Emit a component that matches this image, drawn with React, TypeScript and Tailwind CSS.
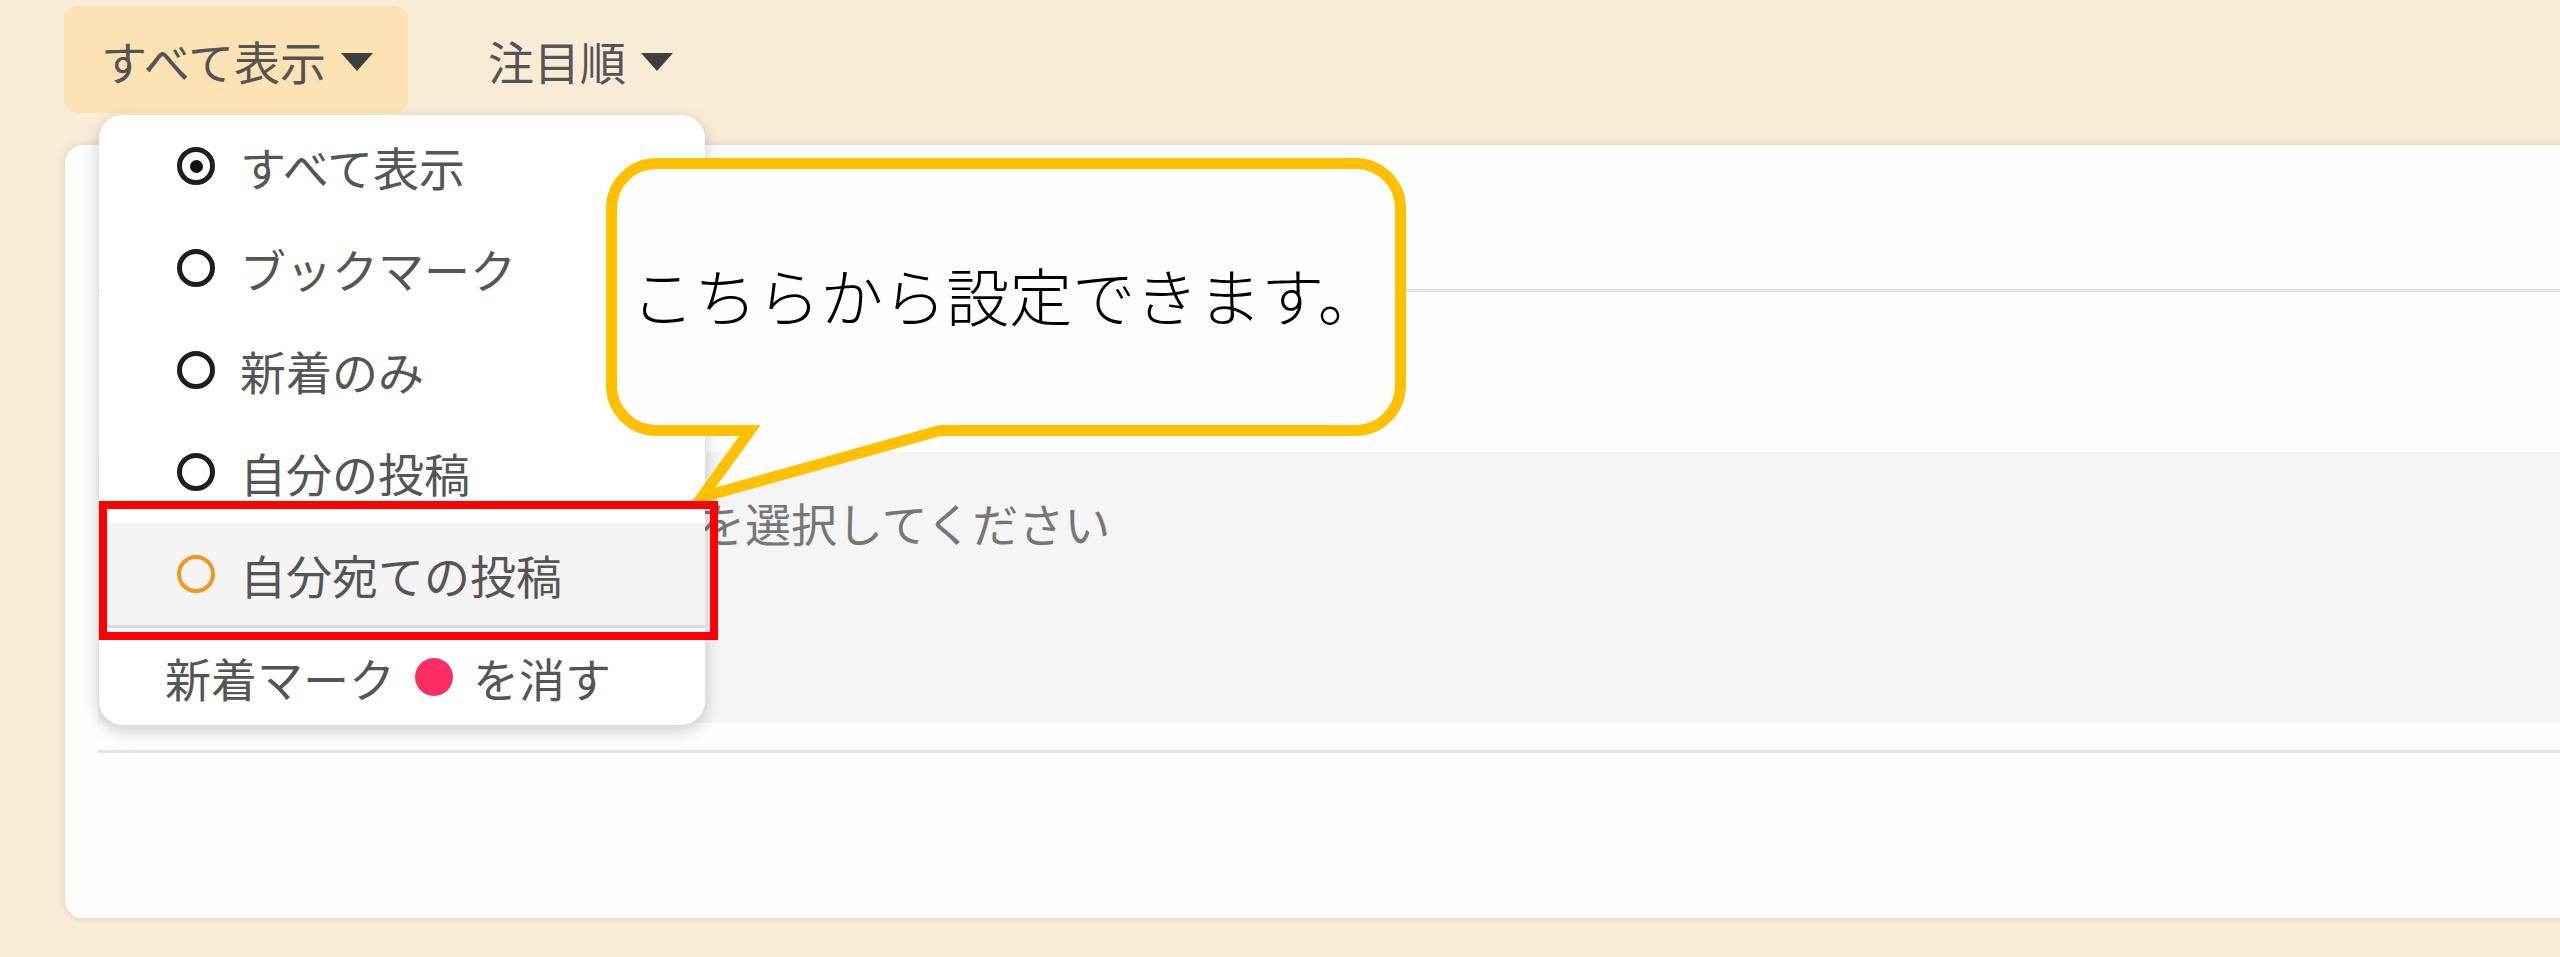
import React from "react";

function Caret() {
  return (
    <svg width="34" height="20" viewBox="0 0 34 20" className="ml-[14px] mt-[4px]">
      <path d="M1 1 H33 L17 19 Z" fill="#3f3f3f" />
    </svg>
  );
}

function Radio({ checked, accent }: { checked?: boolean; accent?: boolean }) {
  if (accent) {
    return <span className="block size-[38px] shrink-0 rounded-full border-[4px] border-[#f3961f]" />;
  }
  return (
    <span className="flex size-[38px] shrink-0 items-center justify-center rounded-full border-[5px] border-[#1e1e1e]">
      {checked && <span className="block size-[13px] rounded-full bg-[#111]" />}
    </span>
  );
}

const items = ["すべて表示", "ブックマーク", "新着のみ", "自分の投稿"];

export default function App() {
  return (
    <div className="relative h-[957px] w-[2560px] overflow-hidden bg-[#f8ecd7] pl-[64px] pt-[6px] font-['Noto_Sans_CJK_JP',sans-serif] text-[46px] text-[#555]">
      {/* tabs */}
      <div className="flex items-center">
        <button className="flex h-[107px] w-[344px] items-center rounded-[14px] bg-[#fde3b4] pl-[37px] leading-none">
          すべて表示
          <Caret />
        </button>
        <button className="ml-[43px] flex h-[107px] items-center px-[37px] leading-none">
          注目順
          <Caret />
        </button>
      </div>

      {/* main card */}
      <div className="ml-[1px] mt-[32px] h-[773px] w-[2600px] rounded-[18px] bg-[#fefefe] pl-[33px] shadow-[0_0_10px_rgba(0,0,0,0.12)]">
        <div className="h-[144px]" />
        <div className="h-[3px] bg-[#dce5e9]" />
        <div className="h-[160px]" />
        <div className="h-[271px] bg-[#f5f5f5] pl-[417px] pt-[36px] leading-[1.5] text-[#777]">
          カテゴリを選択してください
        </div>
        <div className="h-[27px]" />
        <div className="h-[3px] bg-[#dce5e9]" />
      </div>

      {/* dropdown menu */}
      <div className="absolute left-[99px] top-[115px] h-[610px] w-[606px] overflow-hidden rounded-[24px] bg-white shadow-[0_6px_18px_rgba(0,0,0,0.2)]">
        {items.map((label, i) => (
          <div key={label} className="flex h-[102px] items-center pl-[78px] leading-none">
            <Radio checked={i === 0} />
            <span className="ml-[25px]">{label}</span>
          </div>
        ))}
        <div className="flex h-[105px] items-center border-b-[3px] border-[#dadada] bg-[#f4f4f4] pl-[78px] leading-none">
          <Radio accent />
          <span className="ml-[25px]">自分宛ての投稿</span>
        </div>
        <div className="flex h-[97px] items-center pl-[66px] leading-none">
          <span>新着マーク</span>
          <span className="mx-[20px] block size-[38px] rounded-full bg-[#fe2d66]" />
          <span>を消す</span>
        </div>
      </div>

      {/* speech bubble */}
      <div className="absolute left-[606px] top-[158px] flex h-[278px] w-[800px] items-center justify-center pb-[8px]">
        <svg
          className="absolute left-[-10px] top-[-10px] overflow-visible"
          width="820"
          height="370"
          viewBox="0 0 820 370"
        >
          <path
            d="M60.5 15.5 H759.5 A45 45 0 0 1 804.5 60.5 V237.5 A45 45 0 0 1 759.5 282.5 H344 L106 349 L154 282.5 H60.5 A45 45 0 0 1 15.5 237.5 V60.5 A45 45 0 0 1 60.5 15.5 Z"
            fill="#fefefe"
            stroke="#ffc000"
            strokeWidth="11"
            strokeMiterlimit="10"
          />
        </svg>
        <span className="relative text-[63px] font-extralight leading-none text-black">
          こちらから設定できます。
        </span>
      </div>

      {/* highlight frame */}
      <div className="absolute left-[99px] top-[501px] h-[139px] w-[619px] border-[8px] border-[#ff0000]" />
    </div>
  );
}
